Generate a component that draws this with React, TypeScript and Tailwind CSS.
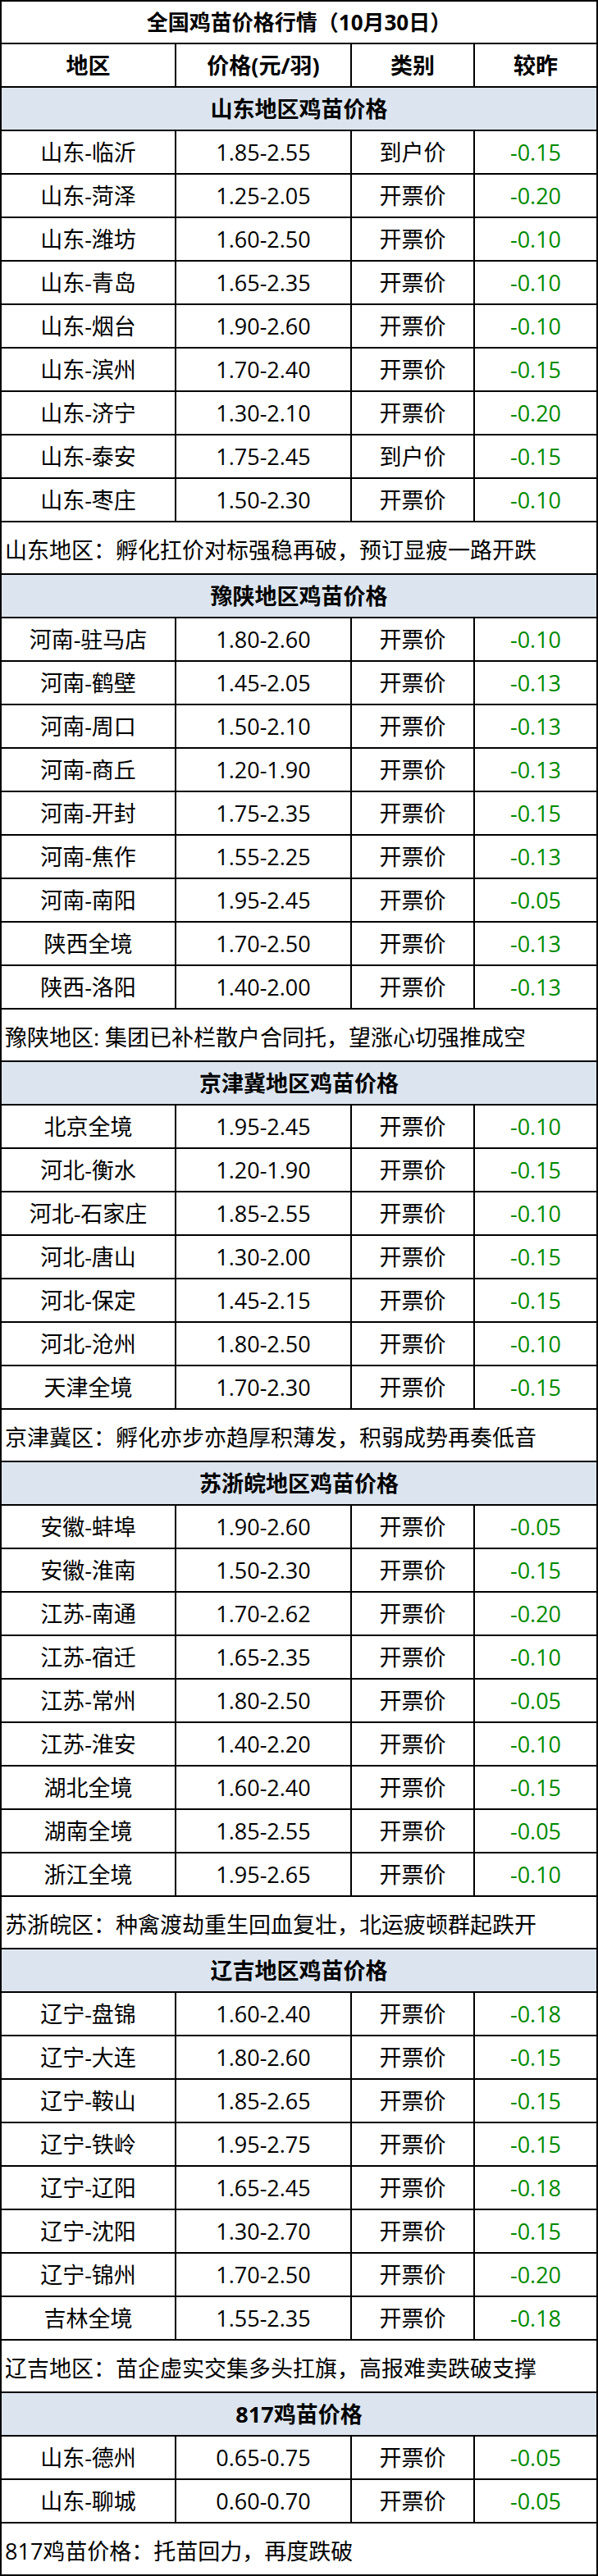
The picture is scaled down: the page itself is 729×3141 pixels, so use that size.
import React from "react";

type Row = [string, string, string, string];
type Section = { title: string; rows: Row[]; note: string };

const sections: Section[] = [
  {
    title: "山东地区鸡苗价格",
    rows: [
      ["山东-临沂", "1.85-2.55", "到户价", "-0.15"],
      ["山东-菏泽", "1.25-2.05", "开票价", "-0.20"],
      ["山东-潍坊", "1.60-2.50", "开票价", "-0.10"],
      ["山东-青岛", "1.65-2.35", "开票价", "-0.10"],
      ["山东-烟台", "1.90-2.60", "开票价", "-0.10"],
      ["山东-滨州", "1.70-2.40", "开票价", "-0.15"],
      ["山东-济宁", "1.30-2.10", "开票价", "-0.20"],
      ["山东-泰安", "1.75-2.45", "到户价", "-0.15"],
      ["山东-枣庄", "1.50-2.30", "开票价", "-0.10"],
    ],
    note: "山东地区：孵化扛价对标强稳再破，预订显疲一路开跌",
  },
  {
    title: "豫陕地区鸡苗价格",
    rows: [
      ["河南-驻马店", "1.80-2.60", "开票价", "-0.10"],
      ["河南-鹤壁", "1.45-2.05", "开票价", "-0.13"],
      ["河南-周口", "1.50-2.10", "开票价", "-0.13"],
      ["河南-商丘", "1.20-1.90", "开票价", "-0.13"],
      ["河南-开封", "1.75-2.35", "开票价", "-0.15"],
      ["河南-焦作", "1.55-2.25", "开票价", "-0.13"],
      ["河南-南阳", "1.95-2.45", "开票价", "-0.05"],
      ["陕西全境", "1.70-2.50", "开票价", "-0.13"],
      ["陕西-洛阳", "1.40-2.00", "开票价", "-0.13"],
    ],
    note: "豫陕地区: 集团已补栏散户合同托，望涨心切强推成空",
  },
  {
    title: "京津冀地区鸡苗价格",
    rows: [
      ["北京全境", "1.95-2.45", "开票价", "-0.10"],
      ["河北-衡水", "1.20-1.90", "开票价", "-0.15"],
      ["河北-石家庄", "1.85-2.55", "开票价", "-0.10"],
      ["河北-唐山", "1.30-2.00", "开票价", "-0.15"],
      ["河北-保定", "1.45-2.15", "开票价", "-0.15"],
      ["河北-沧州", "1.80-2.50", "开票价", "-0.10"],
      ["天津全境", "1.70-2.30", "开票价", "-0.15"],
    ],
    note: "京津冀区：孵化亦步亦趋厚积薄发，积弱成势再奏低音",
  },
  {
    title: "苏浙皖地区鸡苗价格",
    rows: [
      ["安徽-蚌埠", "1.90-2.60", "开票价", "-0.05"],
      ["安徽-淮南", "1.50-2.30", "开票价", "-0.15"],
      ["江苏-南通", "1.70-2.62", "开票价", "-0.20"],
      ["江苏-宿迁", "1.65-2.35", "开票价", "-0.10"],
      ["江苏-常州", "1.80-2.50", "开票价", "-0.05"],
      ["江苏-淮安", "1.40-2.20", "开票价", "-0.10"],
      ["湖北全境", "1.60-2.40", "开票价", "-0.15"],
      ["湖南全境", "1.85-2.55", "开票价", "-0.05"],
      ["浙江全境", "1.95-2.65", "开票价", "-0.10"],
    ],
    note: "苏浙皖区：种禽渡劫重生回血复壮，北运疲顿群起跌开",
  },
  {
    title: "辽吉地区鸡苗价格",
    rows: [
      ["辽宁-盘锦", "1.60-2.40", "开票价", "-0.18"],
      ["辽宁-大连", "1.80-2.60", "开票价", "-0.15"],
      ["辽宁-鞍山", "1.85-2.65", "开票价", "-0.15"],
      ["辽宁-铁岭", "1.95-2.75", "开票价", "-0.15"],
      ["辽宁-辽阳", "1.65-2.45", "开票价", "-0.18"],
      ["辽宁-沈阳", "1.30-2.70", "开票价", "-0.15"],
      ["辽宁-锦州", "1.70-2.50", "开票价", "-0.20"],
      ["吉林全境", "1.55-2.35", "开票价", "-0.18"],
    ],
    note: "辽吉地区：苗企虚实交集多头扛旗，高报难卖跌破支撑",
  },
  {
    title: "817鸡苗价格",
    rows: [
      ["山东-德州", "0.65-0.75", "开票价", "-0.05"],
      ["山东-聊城", "0.60-0.70", "开票价", "-0.05"],
    ],
    note: "817鸡苗价格：托苗回力，再度跌破",
  },
];

const gridCls = "grid grid-cols-[213px_214px_150px_148px] h-[53px] border-b-2 border-black";
const cellCls = "flex items-center justify-center border-r-2 border-black";
const lastCls = "flex items-center justify-center";

export default function App() {
  return (
    <div
      className="w-[729px] bg-white text-black text-[27px] leading-none border-x-2 border-t-2 border-black"
      style={{ fontFamily: '"Open Sans", "Noto Sans CJK SC", sans-serif' }}
    >
      <div className="h-[52px] flex items-center justify-center border-b-2 border-black font-bold text-[26px]">
        全国鸡苗价格行情（10月30日）
      </div>
      <div className={gridCls + " font-bold"}>
        <div className={cellCls}>地区</div>
        <div className={cellCls}>价格(元/羽)</div>
        <div className={cellCls}>类别</div>
        <div className={lastCls}>较昨</div>
      </div>
      {sections.map((s) => (
        <div key={s.title}>
          <div className="h-[53px] flex items-center justify-center border-b-2 border-black bg-[#dce5ef] font-bold">
            {s.title}
          </div>
          {s.rows.map((r) => (
            <div key={r[0]} className={gridCls}>
              <div className={cellCls}>{r[0]}</div>
              <div className={cellCls}>{r[1]}</div>
              <div className={cellCls}>{r[2]}</div>
              <div className={lastCls + " text-[#008a00]"}>{r[3]}</div>
            </div>
          ))}
          <div className="h-[64px] flex items-center pl-[4px] pt-[4px] border-b-2 border-black whitespace-nowrap">
            {s.note}
          </div>
        </div>
      ))}
    </div>
  );
}
